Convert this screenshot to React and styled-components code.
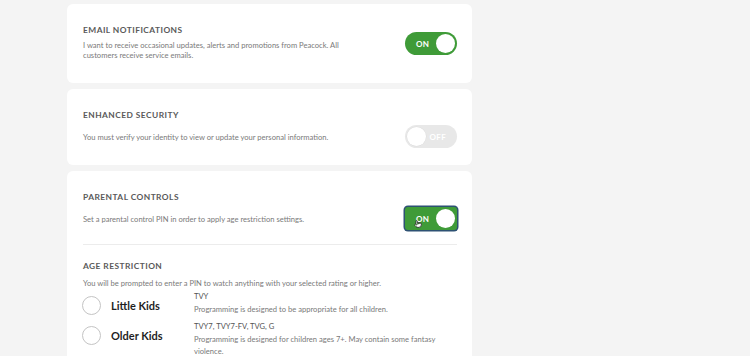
import styled, { createGlobalStyle } from 'styled-components'
import { Pointer } from 'lucide-react'

const GlobalStyle = createGlobalStyle`
  html, body {
    margin: 0;
    padding: 0;
    background: #f4f4f4;
    font-family: 'Lato', 'Liberation Sans', sans-serif;
    -webkit-font-smoothing: antialiased;
  }
`

const Page = styled.div`
  height: 356px;
  overflow: hidden;
  padding: 4px 0 0 67px;
  box-sizing: border-box;
`

const Column = styled.div`
  width: 405px;
  display: flex;
  flex-direction: column;
  gap: 6px;
`

const Card = styled.section`
  background: #fff;
  border-radius: 6px;
  padding: ${(p) => p.$pad || '20px 15px 17px 16px'};
  box-sizing: border-box;
  min-height: ${(p) => p.$minHeight || 'auto'};
`

const Title = styled.h3`
  margin: 0;
  font-size: 8.4px;
  line-height: 12px;
  font-weight: 700;
  letter-spacing: 0.45px;
  color: #5a5a5a;
  text-transform: uppercase;
`

const Row = styled.div`
  display: flex;
  align-items: center;
  justify-content: space-between;
  gap: 20px;
  margin-top: 4px;
`

const Desc = styled.p`
  margin: ${(p) => p.$margin || '0'};
  font-size: 7.6px;
  line-height: 10px;
  color: #7a7a7a;
  max-width: ${(p) => p.$max || 'none'};
`

const Toggle = styled.button`
  position: relative;
  flex: none;
  width: 52px;
  height: 23px;
  border: none;
  padding: 0 11px;
  border-radius: ${(p) => (p.$focused ? '3px' : '12px')};
  background: ${(p) => (p.$on ? '#3f9b38' : '#e8e8e8')};
  box-shadow: ${(p) => (p.$focused ? '0 0 0 1.5px #2d5173' : 'none')};
  display: flex;
  align-items: center;
  justify-content: ${(p) => (p.$on ? 'flex-start' : 'flex-end')};
  color: #fff;
  font-family: 'Lato', 'Liberation Sans', sans-serif;
  font-size: 8px;
  font-weight: 700;
  letter-spacing: 0.3px;
  align-self: ${(p) => (p.$top ? 'flex-start' : 'center')};
  margin-top: ${(p) => (p.$top ? '-8px' : '0')};

  &::after {
    content: '';
    position: absolute;
    top: 2px;
    ${(p) => (p.$on ? 'right: 2px;' : 'left: 2px;')}
    width: 19px;
    height: 19px;
    border-radius: 50%;
    background: #fff;
    box-shadow: ${(p) => (p.$on ? 'none' : '0 0 0 0.5px #ddd')};
  }
`

const Cursor = styled.span`
  position: absolute;
  left: 9px;
  top: 13px;
  display: flex;
`

const Divider = styled.hr`
  border: none;
  border-top: 1px solid #ececec;
  margin: 14px 0 15px;
`

const Options = styled.div`
  display: flex;
  flex-direction: column;
  gap: 6px;
  margin-top: 3px;
`

const Option = styled.label`
  display: grid;
  grid-template-columns: 19px 74px 1fr;
  column-gap: 9px;
  align-items: start;
`

const Radio = styled.span`
  width: 19px;
  height: 19px;
  margin: 5px 0 0 -1px;
  border-radius: 50%;
  border: 1px solid #c4c4c4;
  background: #fff;
  box-sizing: border-box;
`

const OptionName = styled.span`
  margin-top: 5px;
  font-size: 11px;
  line-height: 19px;
  font-weight: 700;
  color: #1f1f1f;
`

const Rating = styled.div`
  display: flex;
  flex-direction: column;
  gap: 1px;
`

const RatingCode = styled.span`
  font-size: 7.6px;
  line-height: 11px;
  color: #555;
`

const RatingText = styled.span`
  font-size: 7.6px;
  line-height: 12px;
  color: #7a7a7a;
  max-width: 245px;
`

const ages = [
  {
    name: 'Little Kids',
    code: 'TVY',
    text: 'Programming is designed to be appropriate for all children.',
  },
  {
    name: 'Older Kids',
    code: 'TVY7, TVY7-FV, TVG, G',
    text: 'Programming is designed for children ages 7+. May contain some fantasy violence.',
  },
]

export default function App() {
  return (
    <>
      <GlobalStyle />
      <Page>
        <Column>
          <Card $pad='20px 15px 23px 16px'>
            <Title>Email Notifications</Title>
            <Row>
              <Desc $max='270px'>
                I want to receive occasional updates, alerts and promotions from Peacock. All
                customers receive service emails.
              </Desc>
              <Toggle $on $top>ON</Toggle>
            </Row>
          </Card>

          <Card>
            <Title>Enhanced Security</Title>
            <Row>
              <Desc>You must verify your identity to view or update your personal information.</Desc>
              <Toggle>OFF</Toggle>
            </Row>
          </Card>

          <Card $minHeight='200px'>
            <Title>Parental Controls</Title>
            <Row>
              <Desc>Set a parental control PIN in order to apply age restriction settings.</Desc>
              <Toggle $on $focused>
                ON
                <Cursor>
                  <Pointer size={8} strokeWidth={2.2} color='#222' fill='#fff' />
                </Cursor>
              </Toggle>
            </Row>
            <Divider />
            <Title>Age Restriction</Title>
            <Desc $margin='6px 0 0'>
              You will be prompted to enter a PIN to watch anything with your selected rating or higher.
            </Desc>
            <Options>
              {ages.map((a) => (
                <Option key={a.name}>
                  <Radio />
                  <OptionName>{a.name}</OptionName>
                  <Rating>
                    <RatingCode>{a.code}</RatingCode>
                    <RatingText>{a.text}</RatingText>
                  </Rating>
                </Option>
              ))}
            </Options>
          </Card>
        </Column>
      </Page>
    </>
  )
}
